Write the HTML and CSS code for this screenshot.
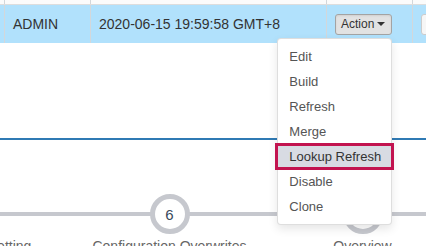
FILE: index.html
```html
<!DOCTYPE html>
<html lang="en">
<head>
<meta charset="utf-8">
<title>Cube list</title>
<link rel="stylesheet" href="styles.css">
</head>
<body>
<div class="page">
  <div class="grid-table">
    <div class="tr tr-top">
      <div class="td c0"></div>
      <div class="td"></div>
      <div class="td"></div>
      <div class="td"></div>
      <div class="td"></div>
    </div>
    <div class="tr tr-active">
      <div class="td c0"></div>
      <div class="td">ADMIN</div>
      <div class="td">2020-06-15 19:59:58 GMT+8</div>
      <div class="td">
        <div class="btn-group">
          <button class="btn btn-action">Action <span class="caret"></span></button>
          <ul class="menu">
            <li class="menu-item">Edit</li>
            <li class="menu-item">Build</li>
            <li class="menu-item">Refresh</li>
            <li class="menu-item">Merge</li>
            <li class="menu-item menu-item-marked">Lookup Refresh</li>
            <li class="menu-item">Disable</li>
            <li class="menu-item">Clone</li>
          </ul>
        </div>
      </div>
      <div class="td"><button class="btn btn-light">Admins</button></div>
    </div>
  </div>

  <div class="divider"></div>

  <div class="stepper">
    <div class="step">
      <div class="step-circle">5</div>
      <div class="step-label">Advanced Setting</div>
    </div>
    <div class="step">
      <div class="step-circle">6</div>
      <div class="step-label">Configuration Overwrites</div>
    </div>
    <div class="step">
      <div class="step-circle">7</div>
      <div class="step-label">Overview</div>
    </div>
  </div>
</div>
</body>
</html>
```

FILE: styles.css
```css
* {
  box-sizing: border-box;
}

html, body {
  margin: 0;
  padding: 0;
  background: #ffffff;
}

body {
  font-family: "Liberation Sans", Arial, Helvetica, sans-serif;
  color: #333333;
}

.page {
  width: 426px;
  height: 246px;
  overflow: hidden;
  position: relative;
}

/* table */
.tr {
  display: grid;
  grid-template-columns: 4px 86px 236px 86px 1fr;
}

.tr-top {
  height: 5px;
  background: #fbfbfb;
  border-bottom: 1px solid #dddddd;
}

.tr-active {
  height: 38px;
  background: #b1e1fc;
}

.td {
  border-left: 1px solid #d3d7da;
  padding: 0 8px;
  display: flex;
  align-items: center;
  font-size: 14px;
  white-space: nowrap;
}

.c0 {
  border-left: none;
  padding: 0;
}

/* buttons */
.btn-group {
  position: relative;
  display: inline-block;
}

.btn {
  font-family: "Liberation Sans", Arial, Helvetica, sans-serif;
  font-size: 12px;
  height: 21px;
  border-radius: 3px;
  color: #333333;
  display: inline-flex;
  align-items: center;
  margin: 0;
}

.btn-action {
  padding: 0 6px 0 5px;
  border: 1px solid #a3a3a3;
  background: #e2e2e2;
  box-shadow: inset 0 1px 2px rgba(0, 0, 0, 0.08);
}

.btn-light {
  padding: 0 6px;
  border: 1px solid #cccccc;
  background: #f6f6f6;
}

.caret {
  display: inline-block;
  width: 0;
  height: 0;
  margin-left: 3px;
  border-top: 4px solid #333333;
  border-left: 4px solid transparent;
  border-right: 4px solid transparent;
}

/* dropdown */
.menu {
  position: absolute;
  right: 0;
  top: calc(100% + 3px);
  width: 115px;
  margin: 0;
  padding: 5px 0;
  list-style: none;
  background: #ffffff;
  border: 1px solid rgba(0, 0, 0, 0.13);
  border-radius: 4px;
  box-shadow: 0 4px 10px rgba(0, 0, 0, 0.1);
  z-index: 10;
}

.menu-item {
  height: 25px;
  line-height: 25px;
  padding-left: 11px;
  font-size: 13px;
  color: #555555;
  white-space: nowrap;
}

.menu-item-marked {
  height: 27px;
  line-height: 21px;
  margin: -1px -3px -1px -3px;
  padding-left: 11px;
  border: 3px solid #c2134f;
  background: #d8dbe3;
  color: #333333;
}

/* divider */
.divider {
  margin-top: 95px;
  height: 2px;
  background: #2f7ab4;
}

/* stepper */
.stepper {
  position: relative;
  display: flex;
  margin-top: 54px;
  margin-left: -120px;
}

.stepper::before {
  content: "";
  position: absolute;
  left: 0;
  right: -200px;
  top: 18px;
  height: 4px;
  background: #c6c8ce;
}

.step {
  position: relative;
  width: 193px;
  flex: none;
  display: flex;
  flex-direction: column;
  align-items: center;
}

.step-circle {
  width: 40px;
  height: 40px;
  border-radius: 50%;
  border: 5px solid #c6c8ce;
  background: #ffffff;
  display: flex;
  align-items: center;
  justify-content: center;
  font-size: 15px;
  color: #3a4a5c;
}

.step-label {
  margin-top: 4px;
  font-size: 14px;
  line-height: 17px;
  color: #666666;
  white-space: nowrap;
}
```
